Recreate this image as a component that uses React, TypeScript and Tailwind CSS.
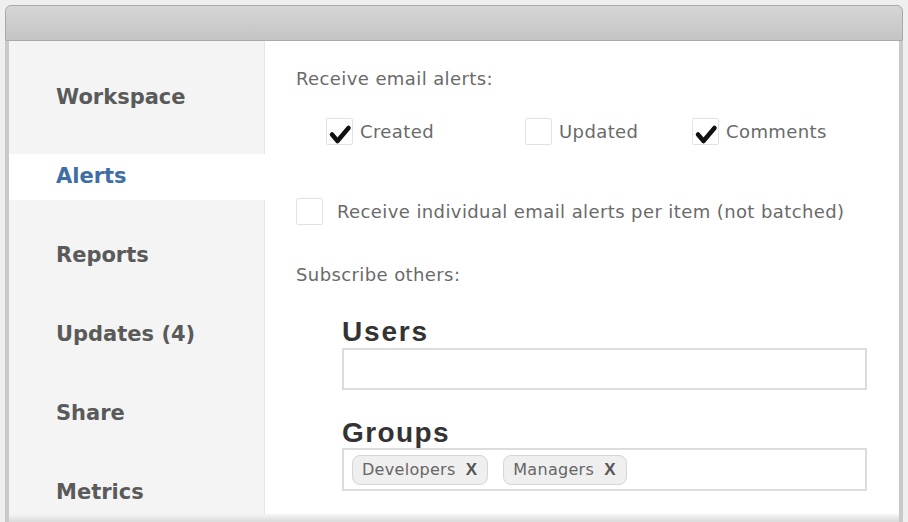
import { Fragment } from 'react';

const navItems = [
  { label: 'Workspace' },
  { label: 'Alerts', active: true },
  { label: 'Reports' },
  { label: 'Updates (4)' },
  { label: 'Share' },
  { label: 'Metrics' },
];

const alertOptions = [
  { label: 'Created', checked: true, width: 'w-[199px]' },
  { label: 'Updated', checked: false, width: 'w-[167px]' },
  { label: 'Comments', checked: true, width: 'w-auto' },
];

function Checkbox({ checked }: { checked: boolean }) {
  return (
    <span className="flex h-[27px] w-[27px] shrink-0 items-center justify-center rounded-[2px] border border-[#e2e2e2] bg-white">
      {checked && (
        <svg viewBox="0 0 24 24" className="h-[24px] w-[24px] translate-y-[3px]">
          <path d="M4 12.5 L9.5 19 L20.5 6" fill="none" stroke="#111" strokeWidth="4.5" strokeLinecap="round" strokeLinejoin="round" />
        </svg>
      )}
    </span>
  );
}

function Tag({ label }: { label: string }) {
  return (
    <span className="flex h-[30px] items-center gap-[10px] rounded-[8px] border border-[#d6d6d6] bg-[#efefef] pl-[9px] pr-[10px] text-[16px] tracking-[0.3px] text-[#666]">
      {label}
      <span className="font-['Liberation_Sans',sans-serif] text-[17px] font-bold text-[#555]">X</span>
    </span>
  );
}

export default function App() {
  return (
    <div className="h-[522px] w-[908px] overflow-hidden bg-[#efefef] px-[5px] pt-[5px] font-['DejaVu_Sans',sans-serif]">
      <div className="flex h-[517px] flex-col">
        {/* Title bar */}
        <div className="h-[36px] shrink-0 rounded-t-[6px] border border-[#a9a9a9] bg-gradient-to-b from-[#d6d6d6] to-[#c4c4c4]" />

        <div className="flex min-h-0 flex-1 border-x-4 border-[#c9c9c9] bg-white">
          {/* Sidebar */}
          <nav className="w-[256px] shrink-0 border-r border-[#e6e6e6] bg-[#f4f4f4] pt-[17px]">
            {navItems.map((item) => (
              <Fragment key={item.label}>
                {item.active ? (
                  <div className="flex h-[79px] items-center">
                    <div className="-mr-px flex h-[46px] w-[257px] items-center bg-white pl-[47px] text-[21px] font-bold text-[#3e6ea4]">
                      {item.label}
                    </div>
                  </div>
                ) : (
                  <div className="flex h-[79px] items-center pl-[47px] text-[21px] font-bold text-[#5a5a5a]">
                    {item.label}
                  </div>
                )}
              </Fragment>
            ))}
          </nav>

          {/* Content */}
          <main className="flex-1 pl-[31px] pt-[26px] text-[18px] tracking-[0.4px] text-[#6a6a6a]">
            <div className="h-[24px] leading-[24px]">Receive email alerts:</div>

            <div className="mt-[26px] ml-[30px] flex h-[28px] items-center">
              {alertOptions.map((opt) => (
                <label key={opt.label} className={`flex items-center gap-[7px] ${opt.width}`}>
                  <Checkbox checked={opt.checked} />
                  <span>{opt.label}</span>
                </label>
              ))}
            </div>

            <label className="mt-[52px] flex h-[28px] items-center gap-[14px]">
              <Checkbox checked={false} />
              <span>Receive individual email alerts per item (not batched)</span>
            </label>

            <div className="mt-[38px] h-[24px] leading-[24px]">Subscribe others:</div>

            <div className="ml-[46px] w-[525px] font-['Liberation_Sans',sans-serif] tracking-normal">
              <div className="mt-[29px] h-[32px] text-[28px] font-bold leading-[32px] tracking-[1.8px] text-[#333]">Users</div>
              <div className="h-[42px] border-2 border-[#dcdcdc] bg-white" />

              <div className="mt-[27px] h-[31px] text-[28px] font-bold leading-[31px] tracking-[1.4px] text-[#333]">Groups</div>
              <div className="flex h-[43px] items-center gap-[15px] border-2 border-[#dcdcdc] bg-white pl-[8px] font-['DejaVu_Sans',sans-serif]">
                <Tag label="Developers" />
                <Tag label="Managers" />
              </div>
            </div>
          </main>
        </div>

        {/* Bottom frame */}
        <div className="h-[8px] shrink-0 border-x-4 border-[#c9c9c9] bg-gradient-to-b from-[#f6f6f6] to-[#d9d9d9]" />
      </div>
    </div>
  );
}
